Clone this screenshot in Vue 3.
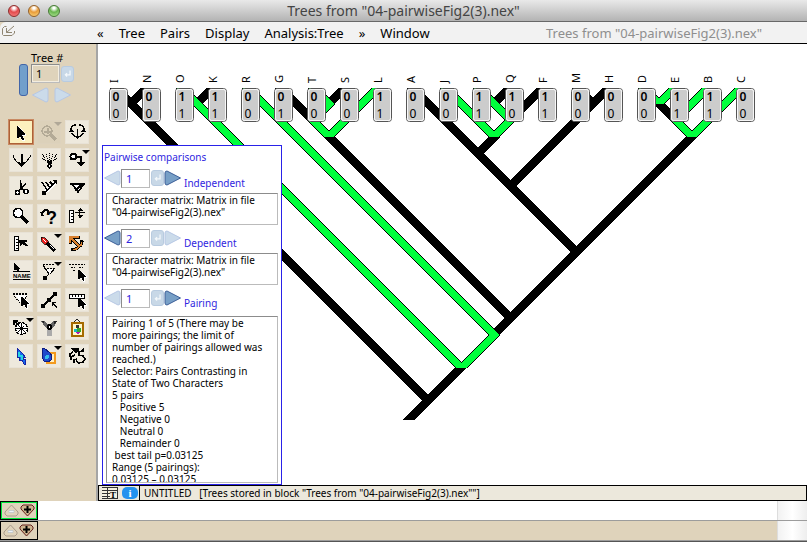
<script setup>
import { ref } from 'vue'

const title = 'Trees from "04-pairwiseFig2(3).nex"'
const menus = ['«', 'Tree', 'Pairs', 'Display', 'Analysis:Tree', '»', 'Window']

const leaves = [
  ['I', 0, 0], ['N', 0, 0], ['O', 1, 1], ['K', 1, 1], ['R', 0, 0],
  ['G', 0, 1], ['T', 0, 0], ['S', 0, 0], ['L', 1, 1], ['A', 0, 0],
  ['J', 0, 0], ['P', 1, 1], ['Q', 1, 0], ['F', 1, 1], ['M', 0, 0],
  ['H', 0, 0], ['D', 0, 0], ['E', 1, 1], ['B', 1, 1], ['C', 0, 0],
].map(([name, first, second], i) => ({ name, first, second, x: 109 + 33 * i }))

// Branches are [x1, y1, x2, y2]; each is drawn as a slanted band with level ends.
const top = 88
const down = (i, y) => [27 + 33 * i + top, top, 27 + 33 * i + y, y]
const up = (i, y) => [201 + 33 * i - top, top, 201 + 33 * i - y, y]

const plain = [
  down(0, 401), up(1, 104), up(3, 104), down(5, 120), up(7, 104),
  [329, 137, 510, 318], down(9, 252), up(12, 104), up(13, 120),
  [494, 137, 477, 154], down(14, 104), up(15, 186),
  [659, 104, 675, 120], [691, 137, 494, 334], [460, 368, 408, 420],
]
const paired = [
  down(2, 368), down(4, 335), [494, 335, 461, 368],
  down(6, 104), [329, 104, 313, 120], [312, 120, 329, 137], up(8, 137),
  down(10, 137), down(11, 120), [510, 120, 493, 137],
  down(16, 104), up(17, 104), up(18, 120), [675, 120, 692, 137], up(19, 137),
]
const band = ([x1, y1, x2, y2], w) =>
  `${x1 - w},${y1} ${x1 + w},${y1} ${x2 + w},${y2} ${x2 - w},${y2}`

const cursor = (x, y) =>
  `<path d="M${x} ${y}v9h1l2-2 2 4h1v-4h2v-1l-7-6z" fill="#000" stroke="#fff" stroke-width="1" paint-order="stroke"/>`
const tools = [
  { name: 'Select', on: true, art: '<path d="M8 6v12h1l2-2 2 4h2v-1l-2-4h3v-1l-7-8z" fill="#000" stroke="#fff" stroke-width="1" paint-order="stroke"/>' },
  { name: 'Magnify', off: true, menu: true, art: '<g fill="none" stroke="#b3aa96"><circle cx="10" cy="11" r="5" stroke-width="1.5"/><path d="M10.500 8v6M7 11.500h7" stroke-width="2"/><path d="M14 15l5 5" stroke-width="3"/></g>' },
  { name: 'Rotate branches', art: '<path d="M6 9Q7 5 11 5M14 5Q18 5 19 9" fill="none" stroke="#000" stroke-width="1.5"/><path d="M7 13l3 4M18 13l-3 4M12.500 9v8" fill="none" stroke="#000" stroke-width="1.500"/><path d="M4 12h5l-3-4zM21 12h-5l3-4zM10 16h5l-2 3h-1z"/>' },
  { name: 'Reroot', art: '<path d="M4 7v2l4 5 4 2M21 7v2l-4 5-4 2" fill="none" stroke="#000" stroke-width="1"/><path d="M12.500 6v10" stroke="#000" stroke-width="2"/><path d="M8 14h2l2 1h1l2-1h2l-4 5h-1z"/>' },
  { name: 'Collapse all', art: '<path d="M5 6l7 9M9 6l3 9M12.500 5v10M16 6l-3 9M20 6l-7 9M5 10l7 5M20 10l-7 5" fill="none" stroke="#000" stroke-dasharray="1 1"/><path d="M10 13h5v2l-2 2h-1l-2-2z"/><path d="M12.500 16l2 2-2 2-2-2z" fill="#fff" stroke="#000"/>' },
  { name: 'Move branch', menu: true, art: '<circle cx="8.500" cy="8.500" r="3" fill="#fff" stroke="#000" stroke-width="2"/><path d="M11 9h5v6" fill="none" stroke="#000" stroke-width="2"/><path d="M12 14h8l-4 5z"/>' },
  { name: 'Cut', art: '<path d="M11.500 4l1 10M17 8L9 15M12 12l4 3" fill="none" stroke="#000" stroke-width="1.500"/><circle cx="8.500" cy="16.500" r="2" fill="#fff" stroke="#000" stroke-width="1.500"/><circle cx="17" cy="15.500" r="2" fill="#fff" stroke="#000" stroke-width="1.500"/>' },
  { name: 'Ladderize', art: '<path d="M7 17L19 6" stroke="#fff" stroke-width="4"/><path d="M7 17L19 6M5 6l5 8M9 6l4 6M13 6l3 3" fill="none" stroke="#000" stroke-width="1.500"/><path d="M15 4h5v5zM5 15h4v4H5z"/>' },
  { name: 'Collapse clade', art: '<path d="M8 9h10l-5 7z" fill="#fff"/><path d="M5 8h15M7 8l6 8 6-8M10 15l6-6" fill="none" stroke="#000" stroke-width="1.500"/>' },
  { name: 'Zoom', art: '<circle cx="9" cy="9" r="4.500" fill="#fff" stroke="#000" stroke-width="1.500"/><path d="M13 13l6 6" stroke="#000" stroke-width="3"/>' },
  { name: 'Query', art: '<path d="M5 12V9l3-3h3M4 8l2 4M11 6v4" fill="none" stroke="#000" stroke-width="1.500"/><text x="9" y="20" class="query">?</text>' },
  { name: 'Stretch scale', art: '<path d="M4.500 6.500h4v12h-4z" fill="#fff" stroke="#000" stroke-width="1"/><path d="M6 9.500h2M6 12.500h2M6 15.500h2M10 8.500h10M14.500 5v9" stroke="#000"/><path d="M12 7h6l-3-3zM12 11h6l-3 3z"/>' },
  { name: 'Measure', art: '<path d="M5.500 4.500h4v14h-4z" fill="#fff" stroke="#000"/><path d="M7 7.500h2M7 10.500h2M7 13.500h2M7 16.500h2" stroke="#000"/><path d="M10 8h8v2h-3l4 3v1h-2l-4-2-1 2h-1z"/>' },
  { name: 'Paint branch', menu: true, art: '<path d="M4 5l4 1 3 3v3l-3 1-3-3z" fill="#e8201c" stroke="#000" stroke-width=".7"/><path d="M10 11l8 8" stroke="#000" stroke-width="3"/><path d="M13 13l4 4" stroke="#fff" stroke-width="1"/><path d="M6 7l3 3" stroke="#fff"/>' },
  { name: 'Arrange', art: '<g fill="none" stroke="#000" stroke-width="3"><path d="M5 12V5h10M6 6l8 8M7 18l4-1 5-4 1-5"/></g><g fill="none" stroke="#d9802e" stroke-width="1.500"><path d="M5 11V5h9M6 6l8 8M8 18l3-1 5-4 1-4"/></g><path d="M15 10h4l-2-3zM6 16v3h3z"/>' },
  { name: 'Name branch', art: '<path d="M5 3v7h1l1-1 2 3h1V9h1z"/><path d="M4 11.500h17M4 19.500h17" stroke="#000"/><text x="4" y="18" class="tag">NAME</text>' },
  { name: 'Highlight clade', menu: true, art: '<path d="M8 9h9l-4 6z" fill="#fff"/><path d="M6 4.500h11M7 8.500h11" stroke="#000" stroke-dasharray="2 1"/><path d="M6 5l6 9M18 8l-5 6M12 14l-4 4" fill="none" stroke="#000" stroke-width="1"/><path d="M6 16h4v4H6z"/>' },
  { name: 'Select leaves', art: '<path d="M4 4.500h16M6 7.500h4M14 7.500h4M8 10.500h3" stroke="#000" stroke-dasharray="2 1"/>' + cursor(13, 10) },
  { name: 'Select clade', art: '<path d="M6 7h12l-6 8z" fill="#fff"/><path d="M4 5.500h15" stroke="#000" stroke-width="2" stroke-dasharray="2 1"/><path d="M5 8l7 8M18 8l-3 4" stroke="#000" stroke-dasharray="1 1"/>' + cursor(12, 9) },
  { name: 'Connect nodes', art: '<path d="M6 18L18 6" stroke="#000" stroke-width="1.500"/><path d="M16 4h4v4h-4zM10 10h4v4h-4zM4 16h4v4H4z"/><path d="M15 14h4v1h-2l3 4-1 1-3-4v2h-1z"/>' },
  { name: 'Branch length', art: '<path d="M4.500 6.500h15v4h-15z" fill="#fff" stroke="#000" stroke-width="1"/><path d="M7.500 7v2M10.500 7v2M13.500 7v2M16.500 7v2" stroke="#000"/>' + cursor(13, 10) },
  { name: 'Geography', menu: true, art: '<circle cx="12.500" cy="12.500" r="6" fill="#fff" stroke="#000" stroke-width="1.500" stroke-dasharray="3 1"/><path d="M12.500 7v12M6 12.500h13" stroke="#000"/><path d="M8 8l9 9M17 8l-9 9" stroke="#000" stroke-dasharray="2 1"/><path d="M4 4h5v2H7l3 3-1 1-3-3v2H4z"/>' },
  { name: 'Join', art: '<path d="M4 5h4l4 5-2 2-2-1zM20 5h-4l-4 5 2 2 3-1z" fill="#666"/><path d="M10 12h5v8h-5z" fill="#aaa"/><path d="M4 5h3v3zM20 5h-3v3z" fill="#222"/><circle cx="12.500" cy="11" r="2" fill="#fff" stroke="#000" stroke-width="2"/>' },
  { name: 'Picture', art: '<path d="M9 6q3-5 6 0" fill="none" stroke="#222"/><path d="M7 7h11v13H7z" fill="#fff7c9" stroke="#a56a00" stroke-width="2"/><path d="M9 13h4v3H9z" fill="#12bac5"/><path d="M12 12h4v4h-4z" fill="#36a830"/><path d="M10 16h5l-2 2z" fill="#b11bb7"/><path d="M11 9h3v3h-3z" fill="#333"/>' },
  { name: 'Pointer', art: '<path d="M8 4v9h2v3h3l2 4h1v-5h-2v-2h2l-2-3-3-3z" fill="#1768ed" stroke="#1525a5"/><path d="M10 8v4h3v4" stroke="#27d4e2" stroke-width="1.500" fill="none"/>' },
  { name: 'Color clade', menu: true, art: '<path d="M10 9h8v10h-8z" fill="#fff0c5" stroke="#f39a1e" stroke-width="2"/><path d="M5 4h2l6 5 2 3-1 4-3 2-4-1-2-4 1-4z" fill="#204acb" stroke="#101d81"/><circle cx="10" cy="13" r="2" fill="#35bdea"/>' },
  { name: 'Hook', art: '<path d="M8 8l-3 2v3M10 11l-4 2v3M12 15l-3 1v3M17 7l-3 1v3l4 1 2 3-2 3-4 1-3-2" fill="none" stroke="#000" stroke-width="1.500"/><path d="M6 4h8v2l-3 3h-1zM14 8l5-4v4z"/>' },
]

const treeNo = ref('1')
const matrix = 'Character matrix: Matrix in file\n"04-pairwiseFig2(3).nex"'
const steps = ref([
  { id: 'independent', label: 'Independent', value: '1', prev: false, next: true, text: matrix },
  { id: 'dependent', label: 'Dependent', value: '2', prev: true, next: false, text: matrix },
  {
    id: 'pairing', label: 'Pairing', value: '1', prev: false, next: true, tall: true,
    text: `Pairing 1 of 5 (There may be more pairings; the limit of number of pairings allowed was reached.)
Selector: Pairs Contrasting in State of Two Characters
5 pairs
   Positive 5
   Negative 0
   Neutral 0
   Remainder 0
 best tail p=0.03125
Range (5 pairings):
0.03125 – 0.03125`,
  },
])
</script>

<template>
  <div class="window">
    <header class="titlebar">
      <div class="lights">
        <button class="light red" aria-label="Close"></button>
        <button class="light amber" aria-label="Minimize"></button>
        <button class="light green" aria-label="Zoom window"></button>
      </div>
      <h1>{{ title }}</h1>
    </header>

    <nav class="menubar">
      <button class="corner" aria-label="Pop in">
        <svg width="14" height="12" viewBox="0 0 14 12" fill="none" stroke="#8f8572">
          <path d="M4.500 1.500H2.500L.5 3.500v6l1 1h8.500l2.500-2.500V6M12 1L4.500 7.500M4.500 3v4.500H10" />
        </svg>
      </button>
      <button v-for="m in menus" :key="m" class="menu">{{ m }}</button>
      <span class="doc">{{ title }}</span>
    </nav>

    <div class="body">
      <aside class="sidebar">
        <div class="tree-nav">
          <div class="bar"></div>
          <div class="tree-fields">
            <label for="tree-no">Tree #</label>
            <div class="line">
              <input id="tree-no" v-model="treeNo" />
              <button class="enter" aria-label="Enter tree number">
                <svg width="13" height="16" viewBox="0 0 13 16"><path d="M9.500 4v5H4M6 7L4 9l2 2" fill="none" stroke="#f4f8fb" stroke-width="1.500" /></svg>
              </button>
            </div>
            <div class="line arrows">
              <button class="arrow pale" aria-label="Previous tree">
                <svg width="17" height="16" viewBox="0 0 17 16"><path d="M.5 8L14 1q2 0 2 2v10q0 2-2 2z" /></svg>
              </button>
              <button class="arrow pale" aria-label="Next tree">
                <svg width="17" height="16" viewBox="0 0 17 16"><path d="M16.500 8L3 1Q1 1 1 3v10q0 2 2 2z" /></svg>
              </button>
            </div>
          </div>
        </div>
        <div class="tools">
          <button v-for="t in tools" :key="t.name" class="tool" :class="{ on: t.on, off: t.off }" :aria-label="t.name">
            <svg viewBox="0 0 24 24" shape-rendering="crispEdges" v-html="t.art"></svg>
            <span v-if="t.menu" class="more"></span>
          </button>
        </div>
      </aside>

      <main class="main">
        <div class="canvas">
          <svg class="tree" width="709" height="441" viewBox="98 44 709 441">
            <g shape-rendering="crispEdges">
              <polygon v-for="(b, i) in plain" :key="'p' + i" :points="band(b, 6)" />
              <polygon v-for="(b, i) in paired" :key="'o' + i" :points="band(b, 6)" />
              <polygon v-for="(b, i) in paired" :key="'g' + i" :points="band(b, 5)" fill="#00ff3c" />
            </g>
            <g v-for="l in leaves" :key="l.name">
              <rect :x="l.x + 0.5" y="88.500" width="18" height="33" rx="3" class="rim" />
              <rect :x="l.x + 1.5" y="89.500" width="16" height="31" rx="2" class="cell" />
              <text :x="l.x + 7" y="101" class="state first">{{ l.first }}</text>
              <text :x="l.x + 7" y="118" class="state">{{ l.second }}</text>
              <text :transform="`translate(${l.x + 9} 83) rotate(-90)`" class="leaf">{{ l.name }}</text>
            </g>
          </svg>

          <section class="panel">
            <h2>Pairwise comparisons</h2>
            <div v-for="s in steps" :key="s.id" class="step" :class="{ tall: s.tall }">
              <div class="line">
                <button class="arrow" :class="{ pale: !s.prev }" :aria-label="'Previous ' + s.label">
                  <svg width="17" height="16" viewBox="0 0 17 16"><path d="M.5 8L14 1q2 0 2 2v10q0 2-2 2z" /></svg>
                </button>
                <input :id="s.id" v-model="s.value" />
                <button class="enter" :aria-label="'Enter ' + s.label">
                  <svg width="13" height="16" viewBox="0 0 13 16"><path d="M9.500 4v5H4M6 7L4 9l2 2" fill="none" stroke="#f4f8fb" stroke-width="1.500" /></svg>
                </button>
                <button class="arrow" :class="{ pale: !s.next }" :aria-label="'Next ' + s.label">
                  <svg width="17" height="16" viewBox="0 0 17 16"><path d="M16.500 8L3 1Q1 1 1 3v10q0 2 2 2z" /></svg>
                </button>
                <label :for="s.id">{{ s.label }}</label>
              </div>
              <textarea readonly :aria-label="s.label + ' description'" :value="s.text"></textarea>
            </div>
          </section>
        </div>

        <footer class="status">
          <div class="status-icons">
            <button aria-label="Show text">
              <svg width="16" height="12" viewBox="0 0 16 12">
                <g shape-rendering="crispEdges">
                  <path d="M0 0h16v12H0z" fill="#f4f0df" />
                  <path d="M0 .5h16M0 3.500h16M0 6.500h9M0 9.500h9M0 11.500h16M5.500 0v12M15.500 0v12" stroke="#333" />
                  <path d="M8 4h7v7H8z" fill="#f4f0df" />
                </g>
                <text x="8" y="11" class="glyph">T</text>
              </svg>
            </button>
            <button class="info" aria-label="Information">i</button>
          </div>
          <p>UNTITLED&nbsp;&nbsp; [Trees stored in block "Trees from "04-pairwiseFig2(3).nex""]</p>
        </footer>
      </main>
    </div>

    <div v-for="n in 2" :key="n" class="strip" :class="{ active: n === 1 }">
      <div class="strip-tools">
        <button :aria-label="'Shrink row ' + n">
          <svg width="15" height="13" viewBox="0 0 15 13"><path d="M7.500 1L14 8v2l-2 2H3l-2-2V8z" fill="#dfd3bb" stroke="#a99b8b" /><path d="M5 6.500h5v2H5z" fill="#edf2f8" stroke="#a9b5c0" stroke-width=".5" /></svg>
        </button>
        <button :aria-label="'Grow row ' + n">
          <svg width="15" height="13" viewBox="0 0 15 13"><path d="M7.500 12L1 5V3l2-2h9l2 2v2z" fill="#cdb48f" stroke="#64201c" /><path d="M7.500 2v7M4 5.500h7" stroke="#000" stroke-width="2" /></svg>
        </button>
      </div>
      <div class="strip-text"></div>
      <div class="gutter"></div>
    </div>
    <div class="edge"></div>
  </div>
</template>

<style>
body { margin: 0; }
</style>

<style scoped>
* { box-sizing: border-box; }
.window {
  display: flex;
  flex-direction: column;
  min-height: 100vh;
  background: #dfd3bb;
  color: #000;
  font: 10px/12px "Noto Sans", "Open Sans", sans-serif;
}
button { padding: 0; border: 0; background: none; font: inherit; color: inherit; }
svg { display: block; }
h1, h2, p { margin: 0; font-weight: 400; }

.titlebar {
  display: grid;
  grid-template-columns: 80px 1fr 80px;
  align-items: center;
  height: 22px;
  border-bottom: 1px solid #686868;
  background: linear-gradient(#e9e9e9, #b3b3b3);
}
.titlebar h1 { text-align: center; font-size: 14px; line-height: 20px; color: #444; }
.lights { display: flex; gap: 8px; padding-left: 8px; }
.light { width: 12px; height: 12px; border: 1px solid #555; border-radius: 50%; }
.red { border-color: #8c2d2c; background: radial-gradient(circle at 50% 20%, #fff 0 10%, #e34b4d 45%, #f98885); }
.amber { border-color: #94602a; background: radial-gradient(circle at 50% 20%, #fff 0 10%, #e99c3a 45%, #ffdc82); }
.green { border-color: #467a35; background: radial-gradient(circle at 50% 20%, #fff 0 10%, #69b64f 45%, #b5e99b); }

.menubar {
  display: flex;
  align-items: center;
  gap: 15px;
  height: 22px;
  padding-right: 45px;
  border-bottom: 1px solid #000;
  border-top-left-radius: 6px;
  background: #f2f2f2;
  font-size: 13px;
}
.corner { flex: none; align-self: flex-start; width: 82px; padding: 3px 0 0 2px; }
.menu { line-height: 20px; }
.doc { margin-left: auto; line-height: 18px; color: #8e8e8e; }

.body { display: flex; flex: 1; }
.sidebar { flex: none; width: 98px; border-right: 2px solid #a5a5a5; background: #dfd3bb; }
.tree-nav { display: flex; gap: 3px; padding: 7px 0 0 19px; }
.bar { width: 9px; height: 32px; margin-top: 13px; border: 1px solid #4265a8; border-radius: 3px; background: #729fcb; }
.tree-fields label { display: block; height: 13px; font-size: 11px; line-height: 13px; }
.line { display: flex; align-items: center; }
.line input {
  width: 29px;
  height: 19px;
  margin: 0;
  padding: 0 0 0 4px;
  border: 1px solid;
  border-color: #8c8c8c #bbb #bbb #8c8c8c;
  background: transparent;
  font: inherit;
  font-size: 11px;
  outline: 0;
}
.tree-fields input { box-shadow: inset 0 0 0 1px #f3ede0; }
.enter { margin-left: 1px; border: 1px solid #b8cbe0; border-radius: 3px; background: #c8d8e7; }
.enter svg { width: 11px; height: 14px; }
.arrow path { fill: #779fc6; stroke: #3c5f98; }
.arrow.pale path { fill: #cbdbea; stroke: #b6c7e4; }
.arrows { gap: 5px; padding: 4px 0 0 1px; }
.tools { display: grid; grid-template-columns: repeat(3, 24px); gap: 4px; padding: 17px 0 0 9px; }
.tool { position: relative; width: 24px; height: 24px; border: 1px solid #e8e2d6; background: #eee9dd; }
.tool > svg { width: 24px; height: 24px; margin: -1px; }
.tool :deep(.query) { font: bold 18px "Liberation Sans", sans-serif; }
.tool :deep(.tag) { font: bold 6px "Liberation Sans", sans-serif; }
.tool.on { border-color: #ad6137; background: #fcf0be; box-shadow: 0 0 0 1px #c98a63; }
.tool.off { border-color: #ddd2bd; background: #dcd1ba; }
.more {
  position: absolute;
  top: 1px;
  right: -2px;
  border: 4px solid transparent;
  border-top-color: #000;
  border-bottom: 0;
}
.off .more { border-top-color: #b0a898; }

.main { display: flex; flex: 1; flex-direction: column; min-width: 0; }
.canvas { position: relative; flex: 1; overflow: hidden; background: #fff; }
.rim { fill: #fff; stroke: #555; }
.cell { fill: #ccc; stroke: #f7f7f7; }
.state { font-size: 12px; text-anchor: middle; }
.first { font-weight: 600; }
.leaf { font-size: 11px; }

.panel {
  position: absolute;
  top: 101px;
  bottom: 0;
  left: 4px;
  display: flex;
  flex-direction: column;
  width: 180px;
  padding: 5px 1px 1px;
  border: 1px solid #2a22e8;
  background: #fff;
  color: #3025e0;
}
.panel h2 { height: 18px; font-size: 10px; line-height: 13px; }
.step { display: flex; flex-direction: column; gap: 4px; padding-bottom: 4px; }
.step.tall { flex: 1; gap: 7px; min-height: 0; padding-bottom: 0; }
.step .line { align-items: flex-start; height: 20px; }
.step .arrow, .step .enter { margin-top: 1px; }
.step input { color: inherit; background: #fff; }
.step label { align-self: flex-end; height: 12px; margin-left: 3px; }
.step textarea {
  height: 32px;
  margin: 0 2px;
  padding: 0 13px 0 5px;
  border: 1px solid;
  border-color: #8c8c8c #bbb #bbb #8c8c8c;
  background: #fff;
  color: #000;
  font: inherit;
  resize: none;
  overflow: hidden;
  outline: 0;
}
.step.tall textarea { flex: 1; min-height: 0; }

.status { display: flex; height: 16px; border: 1px solid #000; background: #ece8dc; }
.status-icons { display: flex; flex: none; align-items: center; gap: 4px; width: 41px; padding-left: 3px; border-right: 1px solid #000; }
.glyph { font: bold 9px "Liberation Serif", serif; }
.info { width: 16px; height: 12px; border-radius: 5px; background: #2492ee; color: #fff; font: bold 11px/12px "Liberation Serif", serif; }
.status p { padding-left: 4px; line-height: 14px; white-space: nowrap; }

.strip { display: flex; height: 20px; border-bottom: 1px solid #9c9c9c; }
.strip-tools { display: flex; align-items: center; gap: 1px; width: 38px; padding: 0 2px; border: 1px solid #000; }
.active .strip-tools { border: 2px solid #00e53c; outline: 1px solid #000; outline-offset: -1px; }
.strip-text { flex: 1; }
.active .strip-text { background: #fff; }
.gutter { width: 30px; border-left: 1px solid #ddd; background: linear-gradient(90deg, #f2f2f2, #fff 50%, #eee); }
.edge { height: 1px; background: #555; }
</style>
